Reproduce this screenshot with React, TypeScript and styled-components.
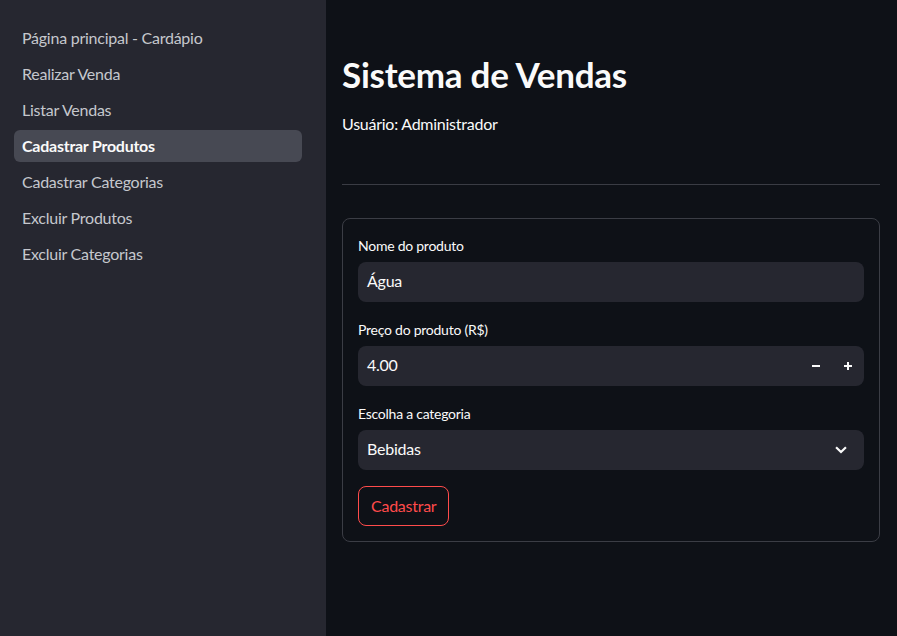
import React from "react";
import styled, { createGlobalStyle } from "styled-components";

const Global = createGlobalStyle`
  html, body { margin: 0; padding: 0; background: #0e1117; }
  body { font-family: Lato, "Noto Sans", sans-serif; color: #fafafa; letter-spacing: -0.25px; }
  * { box-sizing: border-box; }
`;

const Shell = styled.div`
  display: flex;
  width: 897px;
  height: 636px;
  overflow: hidden;
`;

const Sidebar = styled.nav`
  width: 326px;
  flex: none;
  background: #262730;
  padding: 22px 24px 0 14px;
  display: flex;
  flex-direction: column;
  gap: 4px;
`;

const NavItem = styled.div<{ $active?: boolean }>`
  height: 32px;
  display: flex;
  align-items: center;
  padding: 0 0 1px 8px;
  border-radius: 6px;
  font-size: 16px;
  color: ${(p) => (p.$active ? "#fafafa" : "#c5c7cd")};
  font-weight: ${(p) => (p.$active ? 700 : 400)};
  background: ${(p) => (p.$active ? "#474953" : "transparent")};
`;

const Main = styled.main`
  flex: 1;
  padding: 49px 17px 0 16px;
  display: flex;
  flex-direction: column;
`;

const Title = styled.h1`
  margin: 0;
  font-size: 35px;
  font-weight: 700;
  line-height: 50px;
  color: #fafafa;
`;

const UserLine = styled.p`
  margin: 15px 0 0;
  font-size: 16px;
  line-height: 20px;
  color: #fafafa;
`;

const Divider = styled.hr`
  margin: 50px 0 0;
  border: none;
  border-top: 1px solid #3a3c44;
`;

const Form = styled.form`
  margin-top: 33px;
  border: 1px solid #3b3d45;
  border-radius: 8px;
  padding: 15px;
  display: flex;
  flex-direction: column;
  gap: 16px;
`;

const Field = styled.div`
  display: flex;
  flex-direction: column;
`;

const Label = styled.label`
  font-size: 14px;
  line-height: 24px;
  height: 28px;
  color: #fafafa;
`;

const InputBox = styled.div<{ $stepper?: boolean }>`
  height: 40px;
  background: #262730;
  border-radius: 8px;
  display: flex;
  align-items: center;
  padding: ${(p) => (p.$stepper ? "0 0 0 9px" : "0 9px")};
  font-size: 16px;
  color: #fafafa;
`;

const Value = styled.span`
  flex: 1;
  margin-bottom: 3px;
`;

const StepButton = styled.span`
  width: 32px;
  height: 38px;
  display: flex;
  align-items: center;
  justify-content: center;
`;

const Chevron = styled.svg`
  margin-right: 4px;
`;

const Submit = styled.button`
  align-self: flex-start;
  height: 40px;
  padding: 0 12px 2px;
  border: 1px solid #ff4b4b;
  border-radius: 8px;
  background: transparent;
  color: #ff4b4b;
  font-family: inherit;
  letter-spacing: inherit;
  font-size: 16px;
`;

const navItems = [
  "Página principal - Cardápio",
  "Realizar Venda",
  "Listar Vendas",
  "Cadastrar Produtos",
  "Cadastrar Categorias",
  "Excluir Produtos",
  "Excluir Categorias",
];

export default function App() {
  return (
    <>
      <Global />
      <Shell>
        <Sidebar>
          {navItems.map((n) => (
            <NavItem key={n} $active={n === "Cadastrar Produtos"}>
              {n}
            </NavItem>
          ))}
        </Sidebar>
        <Main>
          <Title>Sistema de Vendas</Title>
          <UserLine>Usuário: Administrador</UserLine>
          <Divider />
          <Form onSubmit={(e) => e.preventDefault()}>
            <Field>
              <Label>Nome do produto</Label>
              <InputBox>
                <Value>Água</Value>
              </InputBox>
            </Field>
            <Field>
              <Label>Preço do produto (R$)</Label>
              <InputBox $stepper>
                <Value>4.00</Value>
                <StepButton>
                  <svg width="10" height="10" viewBox="0 0 10 10">
                    <rect x="1" y="4" width="8" height="2" fill="#fafafa" />
                  </svg>
                </StepButton>
                <StepButton>
                  <svg width="10" height="10" viewBox="0 0 10 10">
                    <rect x="1" y="4" width="8" height="2" fill="#fafafa" />
                    <rect x="4" y="1" width="2" height="8" fill="#fafafa" />
                  </svg>
                </StepButton>
              </InputBox>
            </Field>
            <Field>
              <Label>Escolha a categoria</Label>
              <InputBox>
                <Value>Bebidas</Value>
                <Chevron width="20" height="20" viewBox="0 0 24 24">
                  <path d="M7 9.5l5 5 5-5" fill="none" stroke="#fafafa" strokeWidth="2.6" strokeLinecap="square" />
                </Chevron>
              </InputBox>
            </Field>
            <Submit type="submit">Cadastrar</Submit>
          </Form>
        </Main>
      </Shell>
    </>
  );
}
